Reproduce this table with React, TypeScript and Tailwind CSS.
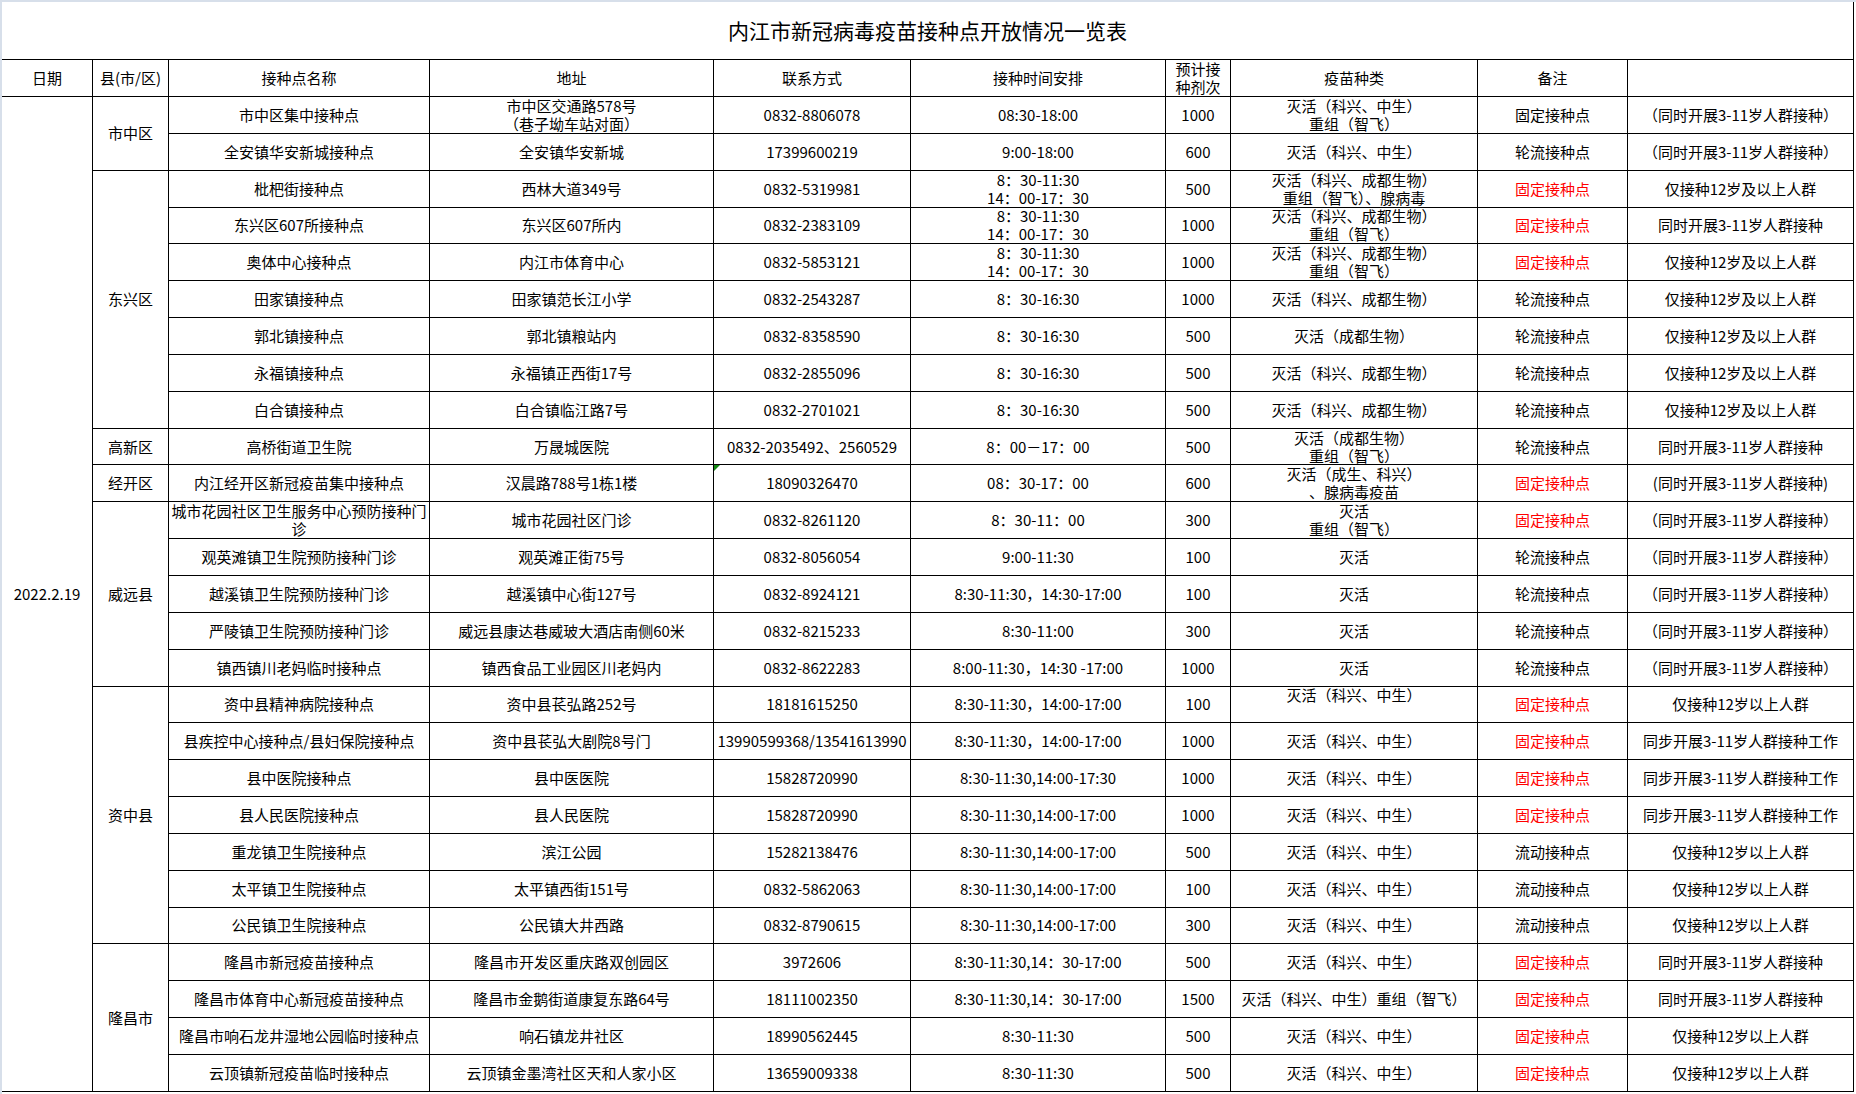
import React from 'react';

type Lines = string | string[];

interface IRow {
    name: Lines;
    addr: Lines;
    phone: string;
    time: Lines;
    dose: string;
    vac: Lines;
    kind: string;
    red?: boolean;
    note: string;
}

interface IGroup {
    county: string;
    rows: IRow[];
}

const T2 = ['8：30-11:30', '14：00-17：30'];
const SPAN_NOTE = '（同时开展3-11岁人群接种）';

const GROUPS: IGroup[] = [
    {
        county: '市中区',
        rows: [
            { name: '市中区集中接种点', addr: ['市中区交通路578号', '（巷子坳车站对面）'], phone: '0832-8806078', time: '08:30-18:00', dose: '1000', vac: ['灭活（科兴、中生）', '重组（智飞）'], kind: '固定接种点', note: SPAN_NOTE },
            { name: '全安镇华安新城接种点', addr: '全安镇华安新城', phone: '17399600219', time: '9:00-18:00', dose: '600', vac: '灭活（科兴、中生）', kind: '轮流接种点', note: SPAN_NOTE },
        ],
    },
    {
        county: '东兴区',
        rows: [
            { name: '枇杷街接种点', addr: '西林大道349号', phone: '0832-5319981', time: T2, dose: '500', vac: ['灭活（科兴、成都生物）', '重组（智飞）、腺病毒'], kind: '固定接种点', red: true, note: '仅接种12岁及以上人群' },
            { name: '东兴区607所接种点', addr: '东兴区607所内', phone: '0832-2383109', time: T2, dose: '1000', vac: ['灭活（科兴、成都生物）', '重组（智飞）'], kind: '固定接种点', red: true, note: '同时开展3-11岁人群接种' },
            { name: '奥体中心接种点', addr: '内江市体育中心', phone: '0832-5853121', time: T2, dose: '1000', vac: ['灭活（科兴、成都生物）', '重组（智飞）'], kind: '固定接种点', red: true, note: '仅接种12岁及以上人群' },
            { name: '田家镇接种点', addr: '田家镇范长江小学', phone: '0832-2543287', time: '8：30-16:30', dose: '1000', vac: '灭活（科兴、成都生物）', kind: '轮流接种点', note: '仅接种12岁及以上人群' },
            { name: '郭北镇接种点', addr: '郭北镇粮站内', phone: '0832-8358590', time: '8：30-16:30', dose: '500', vac: '灭活（成都生物）', kind: '轮流接种点', note: '仅接种12岁及以上人群' },
            { name: '永福镇接种点', addr: '永福镇正西街17号', phone: '0832-2855096', time: '8：30-16:30', dose: '500', vac: '灭活（科兴、成都生物）', kind: '轮流接种点', note: '仅接种12岁及以上人群' },
            { name: '白合镇接种点', addr: '白合镇临江路7号', phone: '0832-2701021', time: '8：30-16:30', dose: '500', vac: '灭活（科兴、成都生物）', kind: '轮流接种点', note: '仅接种12岁及以上人群' },
        ],
    },
    {
        county: '高新区',
        rows: [
            { name: '高桥街道卫生院', addr: '万晟城医院', phone: '0832-2035492、2560529', time: '8：00－17：00', dose: '500', vac: ['灭活（成都生物）', '重组（智飞）'], kind: '轮流接种点', note: '同时开展3-11岁人群接种' },
        ],
    },
    {
        county: '经开区',
        rows: [
            { name: '内江经开区新冠疫苗集中接种点', addr: '汉晨路788号1栋1楼', phone: '18090326470', time: '08：30-17：00', dose: '600', vac: ['灭活（成生、科兴）', '、腺病毒疫苗'], kind: '固定接种点', red: true, note: '(同时开展3-11岁人群接种)' },
        ],
    },
    {
        county: '威远县',
        rows: [
            { name: ['城市花园社区卫生服务中心预防接种门', '诊'], addr: '城市花园社区门诊', phone: '0832-8261120', time: '8：30-11：00', dose: '300', vac: ['灭活', '重组（智飞）'], kind: '固定接种点', red: true, note: SPAN_NOTE },
            { name: '观英滩镇卫生院预防接种门诊', addr: '观英滩正街75号', phone: '0832-8056054', time: '9:00-11:30', dose: '100', vac: '灭活', kind: '轮流接种点', note: SPAN_NOTE },
            { name: '越溪镇卫生院预防接种门诊', addr: '越溪镇中心街127号', phone: '0832-8924121', time: '8:30-11:30，14:30-17:00', dose: '100', vac: '灭活', kind: '轮流接种点', note: SPAN_NOTE },
            { name: '严陵镇卫生院预防接种门诊', addr: '威远县康达巷威玻大酒店南侧60米', phone: '0832-8215233', time: '8:30-11:00', dose: '300', vac: '灭活', kind: '轮流接种点', note: SPAN_NOTE },
            { name: '镇西镇川老妈临时接种点', addr: '镇西食品工业园区川老妈内', phone: '0832-8622283', time: '8:00-11:30，14:30 -17:00', dose: '1000', vac: '灭活', kind: '轮流接种点', note: SPAN_NOTE },
        ],
    },
    {
        county: '资中县',
        rows: [
            { name: '资中县精神病院接种点', addr: '资中县苌弘路252号', phone: '18181615250', time: '8:30-11:30，14:00-17:00', dose: '100', vac: ['灭活（科兴、中生）', '\u00a0'], kind: '固定接种点', red: true, note: '仅接种12岁以上人群' },
            { name: '县疾控中心接种点/县妇保院接种点', addr: '资中县苌弘大剧院8号门', phone: '13990599368/13541613990', time: '8:30-11:30，14:00-17:00', dose: '1000', vac: '灭活（科兴、中生）', kind: '固定接种点', red: true, note: '同步开展3-11岁人群接种工作' },
            { name: '县中医院接种点', addr: '县中医医院', phone: '15828720990', time: '8:30-11:30,14:00-17:30', dose: '1000', vac: '灭活（科兴、中生）', kind: '固定接种点', red: true, note: '同步开展3-11岁人群接种工作' },
            { name: '县人民医院接种点', addr: '县人民医院', phone: '15828720990', time: '8:30-11:30,14:00-17:00', dose: '1000', vac: '灭活（科兴、中生）', kind: '固定接种点', red: true, note: '同步开展3-11岁人群接种工作' },
            { name: '重龙镇卫生院接种点', addr: '滨江公园', phone: '15282138476', time: '8:30-11:30,14:00-17:00', dose: '500', vac: '灭活（科兴、中生）', kind: '流动接种点', note: '仅接种12岁以上人群' },
            { name: '太平镇卫生院接种点', addr: '太平镇西街151号', phone: '0832-5862063', time: '8:30-11:30,14:00-17:00', dose: '100', vac: '灭活（科兴、中生）', kind: '流动接种点', note: '仅接种12岁以上人群' },
            { name: '公民镇卫生院接种点', addr: '公民镇大井西路', phone: '0832-8790615', time: '8:30-11:30,14:00-17:00', dose: '300', vac: '灭活（科兴、中生）', kind: '流动接种点', note: '仅接种12岁以上人群' },
        ],
    },
    {
        county: '隆昌市',
        rows: [
            { name: '隆昌市新冠疫苗接种点', addr: '隆昌市开发区重庆路双创园区', phone: '3972606', time: '8:30-11:30,14：30-17:00', dose: '500', vac: '灭活（科兴、中生）', kind: '固定接种点', red: true, note: '同时开展3-11岁人群接种' },
            { name: '隆昌市体育中心新冠疫苗接种点', addr: '隆昌市金鹅街道康复东路64号', phone: '18111002350', time: '8:30-11:30,14：30-17:00', dose: '1500', vac: '灭活（科兴、中生）重组（智飞）', kind: '固定接种点', red: true, note: '同时开展3-11岁人群接种' },
            { name: '隆昌市响石龙井湿地公园临时接种点', addr: '响石镇龙井社区', phone: '18990562445', time: '8:30-11:30', dose: '500', vac: '灭活（科兴、中生）', kind: '固定接种点', red: true, note: '仅接种12岁以上人群' },
            { name: '云顶镇新冠疫苗临时接种点', addr: '云顶镇金墨湾社区天和人家小区', phone: '13659009338', time: '8:30-11:30', dose: '500', vac: '灭活（科兴、中生）', kind: '固定接种点', red: true, note: '仅接种12岁以上人群' },
        ],
    },
];

const SPAN: Record<number, string> = {
    1: 'row-span-1',
    2: 'row-span-2',
    4: 'row-span-4',
    5: 'row-span-5',
    7: 'row-span-7',
};

function Cell({ v, className = '', children }: { v?: Lines; className?: string; children?: React.ReactNode }) {
    const lines = v === undefined ? [] : Array.isArray(v) ? v : [v];
    return (
        <div className={`relative flex flex-col items-center justify-center overflow-hidden whitespace-nowrap border-r border-b border-black text-center leading-[18px] ${className}`}>
            {lines.map((l, i) => (
                <span key={i} className="block">{l}</span>
            ))}
            {children}
        </div>
    );
}

export default function App() {
    return (
        <div
            className="h-[1094px] w-[1856px] overflow-hidden border-t-2 border-l-2 border-[#d7dfea] bg-white text-[15px] text-black"
            style={{ fontFamily: '"Noto Sans CJK SC", "Noto Sans", sans-serif' }}
        >
            {/* title */}
            <div className="flex h-[58px] w-[1852px] items-center justify-center border-r border-b border-black text-[21px]">
                内江市新冠病毒疫苗接种点开放情况一览表
            </div>

            <div className="grid w-[1852px] grid-cols-[91px_76px_261px_284px_197px_255px_65px_247px_150px_226px] grid-rows-[37px_repeat(27,36.85px)]">
                <Cell v="日期" />
                <Cell v="县(市/区)" />
                <Cell v="接种点名称" />
                <Cell v="地址" />
                <Cell v="联系方式" />
                <Cell v="接种时间安排" />
                <Cell v={['预计接', '种剂次']} />
                <Cell v="疫苗种类" />
                <Cell v="备注" />
                <Cell />

                {GROUPS.map((g, gi) => (
                    <React.Fragment key={g.county}>
                        {gi === 0 && <Cell v="2022.2.19" className="row-span-27" />}
                        <Cell v={g.county} className={SPAN[g.rows.length]} />
                        {g.rows.map((r, ri) => (
                            <React.Fragment key={ri}>
                                <Cell v={r.name} className={ri > 0 ? 'col-start-3' : ''} />
                                <Cell v={r.addr} />
                                <Cell v={r.phone}>
                                    {g.county === '经开区' && (
                                        <span className="absolute top-0 left-0 h-0 w-0 border-t-[6px] border-r-[6px] border-t-[#138a13] border-r-transparent" />
                                    )}
                                </Cell>
                                <Cell v={r.time} />
                                <Cell v={r.dose} />
                                <Cell v={r.vac} />
                                <Cell v={r.kind} className={r.red ? 'text-[#ff0000]' : ''} />
                                <Cell v={r.note} />
                            </React.Fragment>
                        ))}
                    </React.Fragment>
                ))}
            </div>
        </div>
    );
}
